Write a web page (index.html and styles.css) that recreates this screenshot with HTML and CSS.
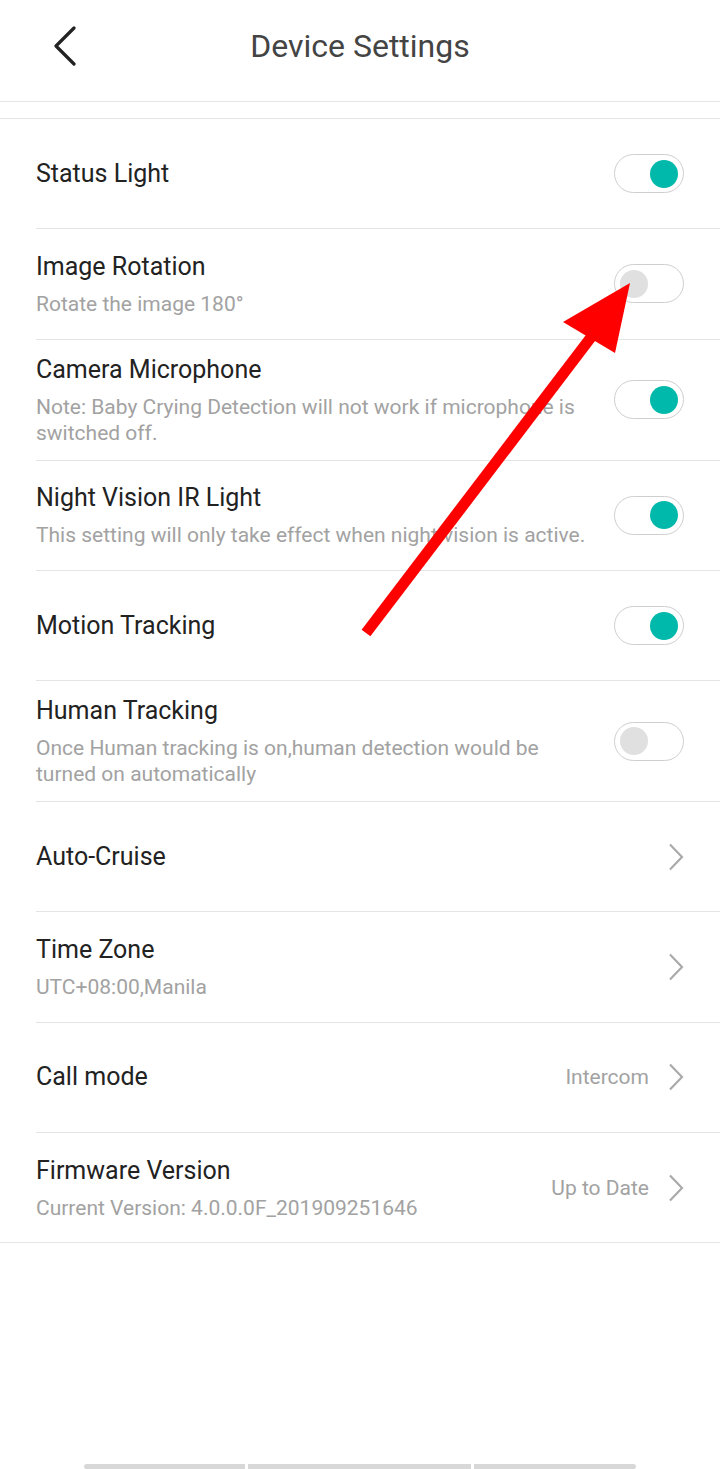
FILE: index.html
```html
<!DOCTYPE html>
<html lang="en">
<head>
  <meta charset="UTF-8" />
  <meta name="viewport" content="width=device-width, initial-scale=1.0"/>
  <title>Device Settings</title>
  <link rel="stylesheet" href="styles.css">
</head>
<body>
  <div class="page">
    <div class="header">
      <div class="back">
        <svg width="26" height="40" viewBox="0 0 26 40">
          <polyline points="22,2 4,20 22,38" fill="none" stroke="#222" stroke-width="3.2" stroke-linecap="round" stroke-linejoin="round"/>
        </svg>
      </div>
      <h1>Device Settings</h1>
      <div></div>
    </div>

    <div class="spacer"></div>

    <div class="list">
      <div class="row">
        <div class="row-text">
          <div class="title">Status Light</div>
        </div>
        <div class="switch on"><span class="knob"></span></div>
      </div>

      <div class="row">
        <div class="row-text">
          <div class="title">Image Rotation</div>
          <div class="sub">Rotate the image 180°</div>
        </div>
        <div class="switch"><span class="knob"></span></div>
      </div>

      <div class="row">
        <div class="row-text">
          <div class="title">Camera Microphone</div>
          <div class="sub">Note: Baby Crying Detection will not work if microphone is switched off.</div>
        </div>
        <div class="switch on"><span class="knob"></span></div>
      </div>

      <div class="row">
        <div class="row-text">
          <div class="title">Night Vision IR Light</div>
          <div class="sub">This setting will only take effect when night vision is active.</div>
        </div>
        <div class="switch on"><span class="knob"></span></div>
      </div>

      <div class="row">
        <div class="row-text">
          <div class="title">Motion Tracking</div>
        </div>
        <div class="switch on"><span class="knob"></span></div>
      </div>

      <div class="row">
        <div class="row-text">
          <div class="title">Human Tracking</div>
          <div class="sub">Once Human tracking is on,human detection would be turned on automatically</div>
        </div>
        <div class="switch"><span class="knob"></span></div>
      </div>

      <div class="row">
        <div class="row-text">
          <div class="title">Auto-Cruise</div>
        </div>
        <div class="row-end">
          <svg class="chevron" width="16" height="28" viewBox="0 0 16 28">
            <polyline points="2,1.5 14,14 2,26.5" fill="none" stroke="#aaa" stroke-width="2.2"/>
          </svg>
        </div>
      </div>

      <div class="row">
        <div class="row-text">
          <div class="title">Time Zone</div>
          <div class="sub">UTC+08:00,Manila</div>
        </div>
        <div class="row-end">
          <svg class="chevron" width="16" height="28" viewBox="0 0 16 28">
            <polyline points="2,1.5 14,14 2,26.5" fill="none" stroke="#aaa" stroke-width="2.2"/>
          </svg>
        </div>
      </div>

      <div class="row">
        <div class="row-text">
          <div class="title">Call mode</div>
        </div>
        <div class="row-end">
          <span class="value">Intercom</span>
          <svg class="chevron" width="16" height="28" viewBox="0 0 16 28">
            <polyline points="2,1.5 14,14 2,26.5" fill="none" stroke="#aaa" stroke-width="2.2"/>
          </svg>
        </div>
      </div>

      <div class="row">
        <div class="row-text">
          <div class="title">Firmware Version</div>
          <div class="sub">Current Version: 4.0.0.0F_201909251646</div>
        </div>
        <div class="row-end">
          <span class="value">Up to Date</span>
          <svg class="chevron" width="16" height="28" viewBox="0 0 16 28">
            <polyline points="2,1.5 14,14 2,26.5" fill="none" stroke="#aaa" stroke-width="2.2"/>
          </svg>
        </div>
      </div>
    </div>

    <div class="nav-bar">
      <span></span><span></span><span></span>
    </div>
  </div>

  <!-- annotation arrow drawn over the list -->
  <svg class="arrow" width="720" height="700" viewBox="0 0 720 700">
    <line x1="366" y1="633" x2="592" y2="336" stroke="#fe0000" stroke-width="11"/>
    <polygon points="630,283 563,322 615,353" fill="#fe0000"/>
  </svg>
</body>
</html>
```

FILE: styles.css
```css
body {
  margin: 0;
  font-family: Roboto, "Noto Sans", Arial, sans-serif;
  background: #fff;
  color: #222;
}

.page {
  min-height: 100vh;
  display: flex;
  flex-direction: column;
}

/* Header */
.header {
  height: 101px;
  border-bottom: 1px solid #e4e4e4;
  display: grid;
  grid-template-columns: 120px 1fr 120px;
  align-items: center;
}
.back {
  padding-left: 52px;
  height: 40px;
  margin-bottom: 10px;
}
.back svg {
  display: block;
}
.header h1 {
  margin: 0 0 10px 0;
  text-align: center;
  font-size: 32px;
  font-weight: 400;
  color: #444;
}

.spacer {
  height: 16px;
}

/* List */
.list {
  border-top: 1px solid #e4e4e4;
  border-bottom: 1px solid #e4e4e4;
}

.row {
  margin-left: 36px;
  padding: 14px 36px 14px 0;
  min-height: 110.3px;
  box-sizing: border-box;
  display: flex;
  align-items: center;
  border-bottom: 1px solid #e4e4e4;
}
.row:last-child {
  border-bottom: none;
  min-height: 109.3px;
}

.row-text {
  flex: 1;
  padding-right: 24px;
}
.title {
  font-size: 25px;
  line-height: 32px;
  color: #222;
}
.sub {
  margin-top: 8px;
  font-size: 21px;
  line-height: 26px;
  color: #a2a2a2;
}

.row-end {
  display: flex;
  align-items: center;
  gap: 19px;
}
.value {
  font-size: 21px;
  color: #a2a2a2;
}
.chevron {
  display: block;
}

/* Switch */
.switch {
  width: 70px;
  height: 39px;
  box-sizing: border-box;
  border: 1px solid #cfcfcf;
  border-radius: 20px;
  padding: 0 5px;
  display: flex;
  align-items: center;
  justify-content: flex-start;
}
.switch.on {
  justify-content: flex-end;
}
.knob {
  width: 28px;
  height: 28px;
  border-radius: 50%;
  background: #e0e0e0;
}
.switch.on .knob {
  background: #00b9ab;
}

/* Bottom gesture bar */
.nav-bar {
  margin-top: auto;
  display: flex;
  justify-content: center;
  gap: 3px;
}
.nav-bar span {
  height: 5px;
  background: #d8d8d8;
}
.nav-bar span:nth-child(1) {
  width: 161px;
  border-radius: 3px 0 0 3px;
}
.nav-bar span:nth-child(2) {
  width: 223px;
}
.nav-bar span:nth-child(3) {
  width: 162px;
  border-radius: 0 3px 3px 0;
}

.arrow {
  position: absolute;
  left: 0;
  top: 0;
  pointer-events: none;
}
```
